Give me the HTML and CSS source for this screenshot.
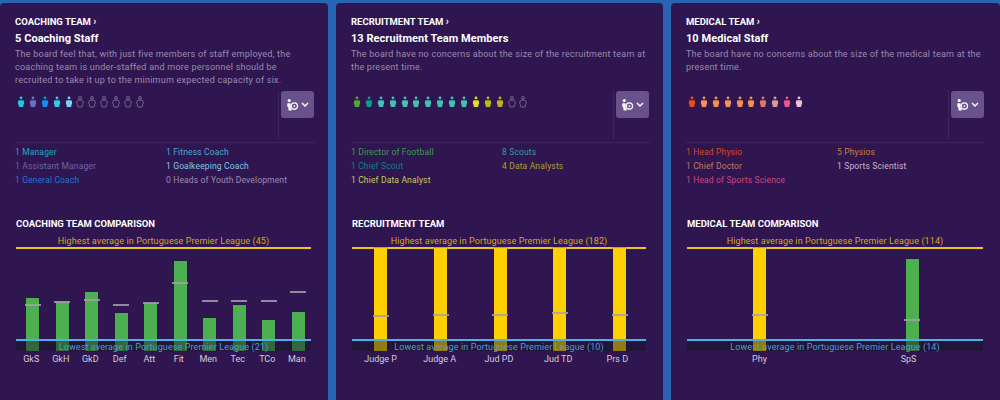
FILE: index.html
```html
<!DOCTYPE html>
<html lang="en">
  <head>
    <meta charset="UTF-8" />
    <meta name="viewport" content="width=device-width, initial-scale=1.0" />
    <title>Staff Overview</title>
    <link rel="stylesheet" href="styles.css">
  </head>
  <body>
    <svg class="icon-defs" width="0" height="0">
      <symbol id="person" viewBox="0 0 8 12">
        <circle cx="4" cy="1.900" r="1.400" />
        <path d="M2.400 4.200h3.200c.9 0 1.500.7 1.500 1.500v1.900c0 .6-.3 1-.7 1.200v1.200c0 .6-.5 1-1 1H2.600c-.5 0-1-.4-1-1V8.800c-.4-.2-.7-.6-.7-1.200V5.700c0-.8.6-1.500 1.500-1.500z" />
      </symbol>
      <symbol id="staff-picker" viewBox="0 0 14 14">
        <circle cx="3.500" cy="2.200" r="1.700" fill="#fff" />
        <path d="M1.500 5h3.200l.6 2.200C4.500 8.500 4.700 10.500 6.200 11.500V13H2.800L2.400 9.500 1.300 8.500z" fill="#fff" />
        <circle cx="9" cy="8.200" r="3.400" fill="none" stroke="#fff" stroke-width="1.400" />
        <circle cx="9" cy="8.200" r="1" fill="#fff" />
      </symbol>
    </svg>

    <div class="panels">
      <section class="panel panel-left">
        <h3 class="team-link">COACHING TEAM <span class="caret">&rsaquo;</span></h3>
        <h2 class="team-count">5 Coaching Staff</h2>
        <p class="team-note">The board feel that, with just five members of staff employed, the coaching team is under-staffed and more personnel should be recruited to take it up to the minimum expected capacity of six.</p>

        <div class="people-row">
          <div class="people">
            <svg class="person" style="color:#25c4d8"><use href="#person" /></svg>
            <svg class="person" style="color:#6f6fc0"><use href="#person" /></svg>
            <svg class="person" style="color:#1a8cf0"><use href="#person" /></svg>
            <svg class="person" style="color:#3cc8e8"><use href="#person" /></svg>
            <svg class="person" style="color:#7fd0f8"><use href="#person" /></svg>
            <svg class="person vacant"><use href="#person" /></svg>
            <svg class="person vacant"><use href="#person" /></svg>
            <svg class="person vacant"><use href="#person" /></svg>
            <svg class="person vacant"><use href="#person" /></svg>
            <svg class="person vacant"><use href="#person" /></svg>
            <svg class="person vacant"><use href="#person" /></svg>
          </div>
          <div class="picker-cell">
            <button class="picker">
              <svg class="picker-icon"><use href="#staff-picker" /></svg>
              <svg class="chevron" viewBox="0 0 8 5"><path d="M1 1l3 3 3-3" /></svg>
            </button>
          </div>
        </div>

        <ul class="roles">
          <li style="color:#1fa8c0">1 Manager</li>
          <li style="color:#4aa8d0">1 Fitness Coach</li>
          <li style="color:#6c66a8">1 Assistant Manager</li>
          <li style="color:#7cc8e8">1 Goalkeeping Coach</li>
          <li style="color:#1a78d0">1 General Coach</li>
          <li style="color:#9a8cae">0 Heads of Youth Development</li>
        </ul>

        <h3 class="chart-title">COACHING TEAM COMPARISON</h3>
        <div class="chart chart-coaching">
          <div class="highest">Highest average in Portuguese Premier League (45)</div>
          <div class="plot">
            <div class="slot"><div class="bar good" style="height:53px"></div><i class="mark" style="bottom:45px"></i></div>
            <div class="slot"><div class="bar good" style="height:49px"></div><i class="mark" style="bottom:48px"></i></div>
            <div class="slot"><div class="bar good" style="height:59px"></div><i class="mark" style="bottom:50px"></i></div>
            <div class="slot"><div class="bar good" style="height:38px"></div><i class="mark" style="bottom:45px"></i></div>
            <div class="slot"><div class="bar good" style="height:48px"></div><i class="mark" style="bottom:47px"></i></div>
            <div class="slot"><div class="bar good" style="height:90px"></div><i class="mark" style="bottom:67px"></i></div>
            <div class="slot"><div class="bar good" style="height:33px"></div><i class="mark" style="bottom:49px"></i></div>
            <div class="slot"><div class="bar good" style="height:46px"></div><i class="mark" style="bottom:49px"></i></div>
            <div class="slot"><div class="bar good" style="height:31px"></div><i class="mark" style="bottom:49px"></i></div>
            <div class="slot"><div class="bar good" style="height:39px"></div><i class="mark" style="bottom:58px"></i></div>
            <div class="lowest-strip"><span>Lowest average in Portuguese Premier League (21)</span></div>
          </div>
          <div class="axis-labels">
            <span>GkS</span><span>GkH</span><span>GkD</span><span>Def</span><span>Att</span>
            <span>Fit</span><span>Men</span><span>Tec</span><span>TCo</span><span>Man</span>
          </div>
        </div>
      </section>

      <section class="panel panel-middle">
        <h3 class="team-link">RECRUITMENT TEAM <span class="caret">&rsaquo;</span></h3>
        <h2 class="team-count">13 Recruitment Team Members</h2>
        <p class="team-note">The board have no concerns about the size of the recruitment team at the present time.</p>

        <div class="people-row">
          <div class="people">
            <svg class="person" style="color:#4ca83c"><use href="#person" /></svg>
            <svg class="person" style="color:#0d9a8c"><use href="#person" /></svg>
            <svg class="person" style="color:#45c0b0"><use href="#person" /></svg>
            <svg class="person" style="color:#45c0b0"><use href="#person" /></svg>
            <svg class="person" style="color:#45c0b0"><use href="#person" /></svg>
            <svg class="person" style="color:#45c0b0"><use href="#person" /></svg>
            <svg class="person" style="color:#45c0b0"><use href="#person" /></svg>
            <svg class="person" style="color:#45c0b0"><use href="#person" /></svg>
            <svg class="person" style="color:#45c0b0"><use href="#person" /></svg>
            <svg class="person" style="color:#45c0b0"><use href="#person" /></svg>
            <svg class="person" style="color:#dcdc28"><use href="#person" /></svg>
            <svg class="person" style="color:#b8b820"><use href="#person" /></svg>
            <svg class="person" style="color:#c0b020"><use href="#person" /></svg>
            <svg class="person vacant"><use href="#person" /></svg>
            <svg class="person vacant"><use href="#person" /></svg>
          </div>
          <div class="picker-cell">
            <button class="picker">
              <svg class="picker-icon"><use href="#staff-picker" /></svg>
              <svg class="chevron" viewBox="0 0 8 5"><path d="M1 1l3 3 3-3" /></svg>
            </button>
          </div>
        </div>

        <ul class="roles">
          <li style="color:#3f9a50">1 Director of Football</li>
          <li style="color:#3a9a98">8 Scouts</li>
          <li style="color:#0d8080">1 Chief Scout</li>
          <li style="color:#a8a030">4 Data Analysts</li>
          <li style="color:#c8c860">1 Chief Data Analyst</li>
        </ul>

        <h3 class="chart-title">RECRUITMENT TEAM</h3>
        <div class="chart chart-recruitment">
          <div class="highest">Highest average in Portuguese Premier League (182)</div>
          <div class="plot">
            <div class="slot"><div class="bar top" style="height:103px"></div><i class="mark" style="bottom:34px"></i></div>
            <div class="slot"><div class="bar top" style="height:103px"></div><i class="mark" style="bottom:35px"></i></div>
            <div class="slot"><div class="bar top" style="height:103px"></div><i class="mark" style="bottom:35px"></i></div>
            <div class="slot"><div class="bar top" style="height:103px"></div><i class="mark" style="bottom:37px"></i></div>
            <div class="slot"><div class="bar top" style="height:103px"></div><i class="mark" style="bottom:35px"></i></div>
            <div class="lowest-strip"><span>Lowest average in Portuguese Premier League (10)</span></div>
          </div>
          <div class="axis-labels">
            <span>Judge P</span><span>Judge A</span><span>Jud PD</span><span>Jud TD</span><span>Prs D</span>
          </div>
        </div>
      </section>

      <section class="panel panel-right">
        <h3 class="team-link">MEDICAL TEAM <span class="caret">&rsaquo;</span></h3>
        <h2 class="team-count">10 Medical Staff</h2>
        <p class="team-note">The board have no concerns about the size of the medical team at the present time.</p>

        <div class="people-row">
          <div class="people">
            <svg class="person" style="color:#e05020"><use href="#person" /></svg>
            <svg class="person" style="color:#f09058"><use href="#person" /></svg>
            <svg class="person" style="color:#f09058"><use href="#person" /></svg>
            <svg class="person" style="color:#f09058"><use href="#person" /></svg>
            <svg class="person" style="color:#f09058"><use href="#person" /></svg>
            <svg class="person" style="color:#f09058"><use href="#person" /></svg>
            <svg class="person" style="color:#d87868"><use href="#person" /></svg>
            <svg class="person" style="color:#d89a90"><use href="#person" /></svg>
            <svg class="person" style="color:#e85890"><use href="#person" /></svg>
            <svg class="person" style="color:#f0c0d8"><use href="#person" /></svg>
          </div>
          <div class="picker-cell">
            <button class="picker">
              <svg class="picker-icon"><use href="#staff-picker" /></svg>
              <svg class="chevron" viewBox="0 0 8 5"><path d="M1 1l3 3 3-3" /></svg>
            </button>
          </div>
        </div>

        <ul class="roles">
          <li style="color:#d04a20">1 Head Physio</li>
          <li style="color:#d07840">5 Physios</li>
          <li style="color:#c07868">1 Chief Doctor</li>
          <li style="color:#d0b0c8">1 Sports Scientist</li>
          <li style="color:#c84880">1 Head of Sports Science</li>
        </ul>

        <h3 class="chart-title">MEDICAL TEAM COMPARISON</h3>
        <div class="chart chart-medical">
          <div class="highest">Highest average in Portuguese Premier League (114)</div>
          <div class="plot">
            <div class="slot"><div class="bar top" style="height:103px"></div><i class="mark" style="bottom:35px"></i></div>
            <div class="slot"><div class="bar good" style="height:92px"></div><i class="mark" style="bottom:30px"></i></div>
            <div class="lowest-strip"><span>Lowest average in Portuguese Premier League (14)</span></div>
          </div>
          <div class="axis-labels">
            <span>Phy</span><span>SpS</span>
          </div>
        </div>
      </section>
    </div>
  </body>
</html>
```

FILE: styles.css
```css
body {
  margin: 0;
  height: 400px;
  overflow: hidden;
  background: #2764b4;
  font-family: "Roboto", "Liberation Sans", sans-serif;
  color: #fff;
}

.icon-defs {
  position: absolute;
}

.panels {
  display: flex;
  gap: 8px;
  padding-top: 3px;
}

.panel {
  box-sizing: border-box;
  height: 400px;
  padding: 13px 13px 0 15px;
  background: #2f1650;
  border-radius: 4px;
}

.panel-left {
  width: 328px;
}

.panel-middle {
  width: 327px;
}

.panel-right {
  width: 329px;
  padding-right: 15px;
}

.team-link,
.chart-title {
  margin: 0;
  font-size: 9.5px;
  line-height: 12px;
  font-weight: 700;
}

.caret {
  font-size: 10px;
}

.team-count {
  margin: 3px 0 0;
  font-size: 11px;
  line-height: 16px;
  font-weight: 700;
  letter-spacing: 0.05px;
}

.team-note {
  margin: 1px 0 0;
  height: 42px;
  font-size: 9px;
  line-height: 13px;
  letter-spacing: 0.24px;
  color: #9a8cae;
}

/* Headcount row with the picker on its right */
.people-row {
  display: flex;
  justify-content: space-between;
  height: 52px;
  border-bottom: 1px solid #3d2560;
}

.people {
  display: flex;
  gap: 3.9px;
  padding: 6px 0 0 2px;
  height: 12px;
}

.person {
  width: 8px;
  height: 12px;
  fill: currentColor;
}

.person.vacant {
  fill: none;
  stroke: #7a6a90;
  stroke-width: 1;
}

.picker-cell {
  width: 36px;
  height: 49px;
  border-left: 1px solid #3d2560;
  padding: 1px 0 0 2px;
  box-sizing: border-box;
  margin-right: 1px;
}

.picker {
  display: flex;
  align-items: center;
  justify-content: center;
  gap: 2px;
  width: 33px;
  height: 27px;
  padding: 0;
  border: 0;
  border-radius: 3px;
  background: #69518c;
}

.picker-icon {
  width: 13px;
  height: 14px;
}

.chevron {
  width: 8px;
  height: 5px;
  fill: none;
  stroke: #fff;
  stroke-width: 1.4;
}

.roles {
  display: grid;
  grid-template-columns: 151px 1fr;
  grid-auto-rows: 14px;
  height: 42px;
  margin: 2px 0 0;
  padding: 0;
  list-style: none;
  font-size: 8.5px;
  line-height: 14px;
  letter-spacing: 0.15px;
}

.chart-title {
  margin-top: 31px;
  padding-left: 1px;
}

.chart {
  margin: 5px 4px 0 0;
  padding-left: 1px;
}

.chart-medical {
  margin-right: 2px;
}

.highest {
  text-align: center;
  font-size: 9px;
  line-height: 12px;
  letter-spacing: 0.11px;
  color: #d8a81a;
  border-bottom: 2px solid #f0c420;
  height: 12px;
}

/* Bars stand on the bottom of the plot, the strip lies over them */
.plot {
  position: relative;
  display: flex;
  align-items: flex-end;
  height: 102px;
}

.slot {
  position: relative;
  flex: 1;
  display: flex;
  justify-content: center;
  align-items: flex-end;
  height: 100%;
}

.bar {
  width: 13px;
  box-shadow: 0 0 0 0.5px rgba(40, 20, 60, 0.4);
}

.bar.good {
  background: #4caf50;
}

.bar.top {
  background: #ffd000;
}

.mark {
  position: absolute;
  left: 50%;
  width: 16px;
  height: 2px;
  margin-left: -8px;
  background: rgba(165, 160, 170, 0.85);
}

.lowest-strip {
  position: absolute;
  left: 0;
  right: 0;
  bottom: 0;
  height: 10px;
  border-top: 2px solid #4db0e8;
  background: rgba(20, 20, 30, 0.45);
  text-align: center;
  font-size: 9px;
  line-height: 13px;
  letter-spacing: 0.11px;
  color: #4a9fd8;
}

.axis-labels {
  display: flex;
  margin-top: 2px;
  font-size: 9px;
  line-height: 12px;
  color: #d5cbdc;
}

.axis-labels span {
  position: relative;
  flex: 1;
  text-align: center;
}

/* Bar slots do not quite line up with the axis lines */
.chart-coaching .slot {
  left: 2px;
}

.chart-coaching .axis-labels span {
  left: 0.5px;
}

.chart-recruitment .slot {
  flex: 0 0 59.7px;
  left: -1px;
}

.chart-recruitment .axis-labels span {
  flex: 0 0 59.2px;
  left: -1px;
}

.chart-medical .slot {
  flex: 0 0 152.3px;
  left: -3.4px;
}

.chart-medical .axis-labels span {
  flex: 0 0 149px;
  left: -2px;
}
```
